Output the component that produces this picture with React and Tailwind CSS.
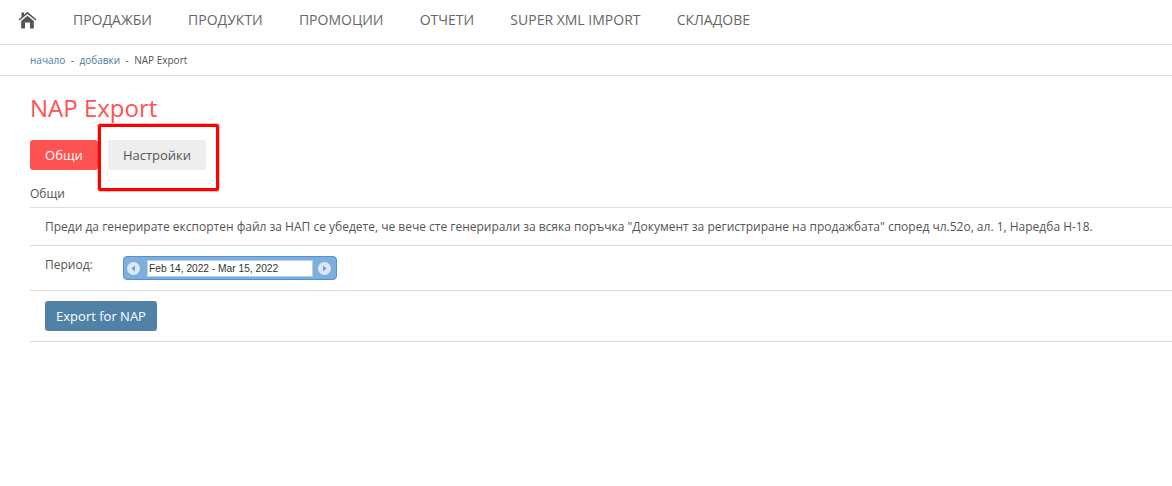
const NAV_ITEMS = ['ПРОДАЖБИ', 'ПРОДУКТИ', 'ПРОМОЦИИ', 'ОТЧЕТИ', 'SUPER XML IMPORT', 'СКЛАДОВЕ'];

function HomeIcon() {
  return (
    <svg width="19" height="18" viewBox="0 0 19 18" className="text-[#555]">
      <path d="M3.5 1.5 H6 V4.5 L3.5 6.5 Z" fill="currentColor" />
      <path d="M1 9 L9.5 1.8 L18 9" fill="none" stroke="currentColor" strokeWidth="1.6" />
      <path d="M3.2 10 L9.5 4.8 L15.8 10 V17.5 H12 V11.5 H7 V17.5 H3.2 Z" fill="currentColor" />
    </svg>
  );
}

function Arrow({ dir }) {
  return (
    <span className="flex h-[13px] w-[13px] shrink-0 items-center justify-center rounded-full bg-[#d9e8f6]">
      <svg width="7" height="7" viewBox="0 0 7 7">
        <path d={dir === 'left' ? 'M5 0.5 L1.5 3.5 L5 6.5 Z' : 'M2 0.5 L5.5 3.5 L2 6.5 Z'} fill="#7a9cbc" />
      </svg>
    </span>
  );
}

export default function App() {
  return (
    <div className="relative h-[486px] w-[1172px] overflow-hidden bg-white font-['Open_Sans',sans-serif] text-[#555]">
      {/* Top nav */}
      <nav className="flex h-[45px] items-start border-b border-[#ddd] pl-[18px]">
        <div className="mt-[11px]">
          <HomeIcon />
        </div>
        <ul className="ml-[36px] mt-[10px] flex gap-[36.2px] text-sm text-[#666]">
          {NAV_ITEMS.map((item) => (
            <li key={item}>{item}</li>
          ))}
        </ul>
      </nav>

      {/* Breadcrumb */}
      <div className="flex h-[31px] items-center gap-[5.5px] border-b border-[#ddd] pl-[30px] text-[10px]">
        <span className="text-[#4a7a9f]">начало</span>
        <span>-</span>
        <span className="text-[#4a7a9f]">добавки</span>
        <span>-</span>
        <span>NAP Export</span>
      </div>

      <div className="pl-[30px]">
        <h1 className="mt-[15px] text-2xl leading-[33px] text-[#ff5252]">NAP Export</h1>

        <div className="mt-[16px] flex gap-[10px] text-[13px]">
          <button className="h-[30px] w-[68px] rounded-[3px] bg-[#ff5252] pt-[2px] text-white">Общи</button>
          <button className="h-[30px] w-[98px] rounded-[3px] bg-[#eee] pt-[2px] text-[#555]">Настройки</button>
        </div>

        <div className="mt-[15px] h-[22px] text-xs leading-[17px]">Общи</div>

        <div className="flex h-[38px] items-center border-t border-[#ddd] pl-[15px] text-xs">
          Преди да генерирате експортен файл за НАП се убедете, че вече сте генерирали за всяка поръчка "Документ за регистриране на продажбата" според чл.52о, ал. 1, Наредба Н-18.
        </div>

        <div className="flex h-[45px] border-t border-[#ddd] pl-[15px] text-xs">
          <span className="mt-[11px] w-[78px]">Период:</span>
          <div className="mt-[10px] flex h-[24px] w-[214px] items-center rounded-[4px] border border-[#4b94d6] bg-[#80aedb] pl-[3px] pr-[5px]">
            <Arrow dir="left" />
            <span className="ml-[7px] flex h-[17px] w-[166px] items-center border border-[#b5d2ec] bg-white pl-[1px] pt-[1px] font-['Liberation_Sans',sans-serif] text-[10.2px] text-[#333]">
              Feb 14, 2022 - Mar 15, 2022
            </span>
            <span className="ml-auto">
              <Arrow dir="right" />
            </span>
          </div>
        </div>

        <div className="flex h-[52px] items-start border-y border-[#ddd] pl-[15px] pt-[10px]">
          <button className="h-[30px] w-[112px] rounded-[3px] bg-[#5082a8] pt-[2px] text-[13px] text-white">Export for NAP</button>
        </div>
      </div>

      {/* Red annotation box */}
      <div className="absolute left-[98px] top-[124px] h-[67px] w-[121px] rounded-[2px] border-[3px] border-[#f00] outline outline-1 outline-[#ff000040]" />
    </div>
  );
}
